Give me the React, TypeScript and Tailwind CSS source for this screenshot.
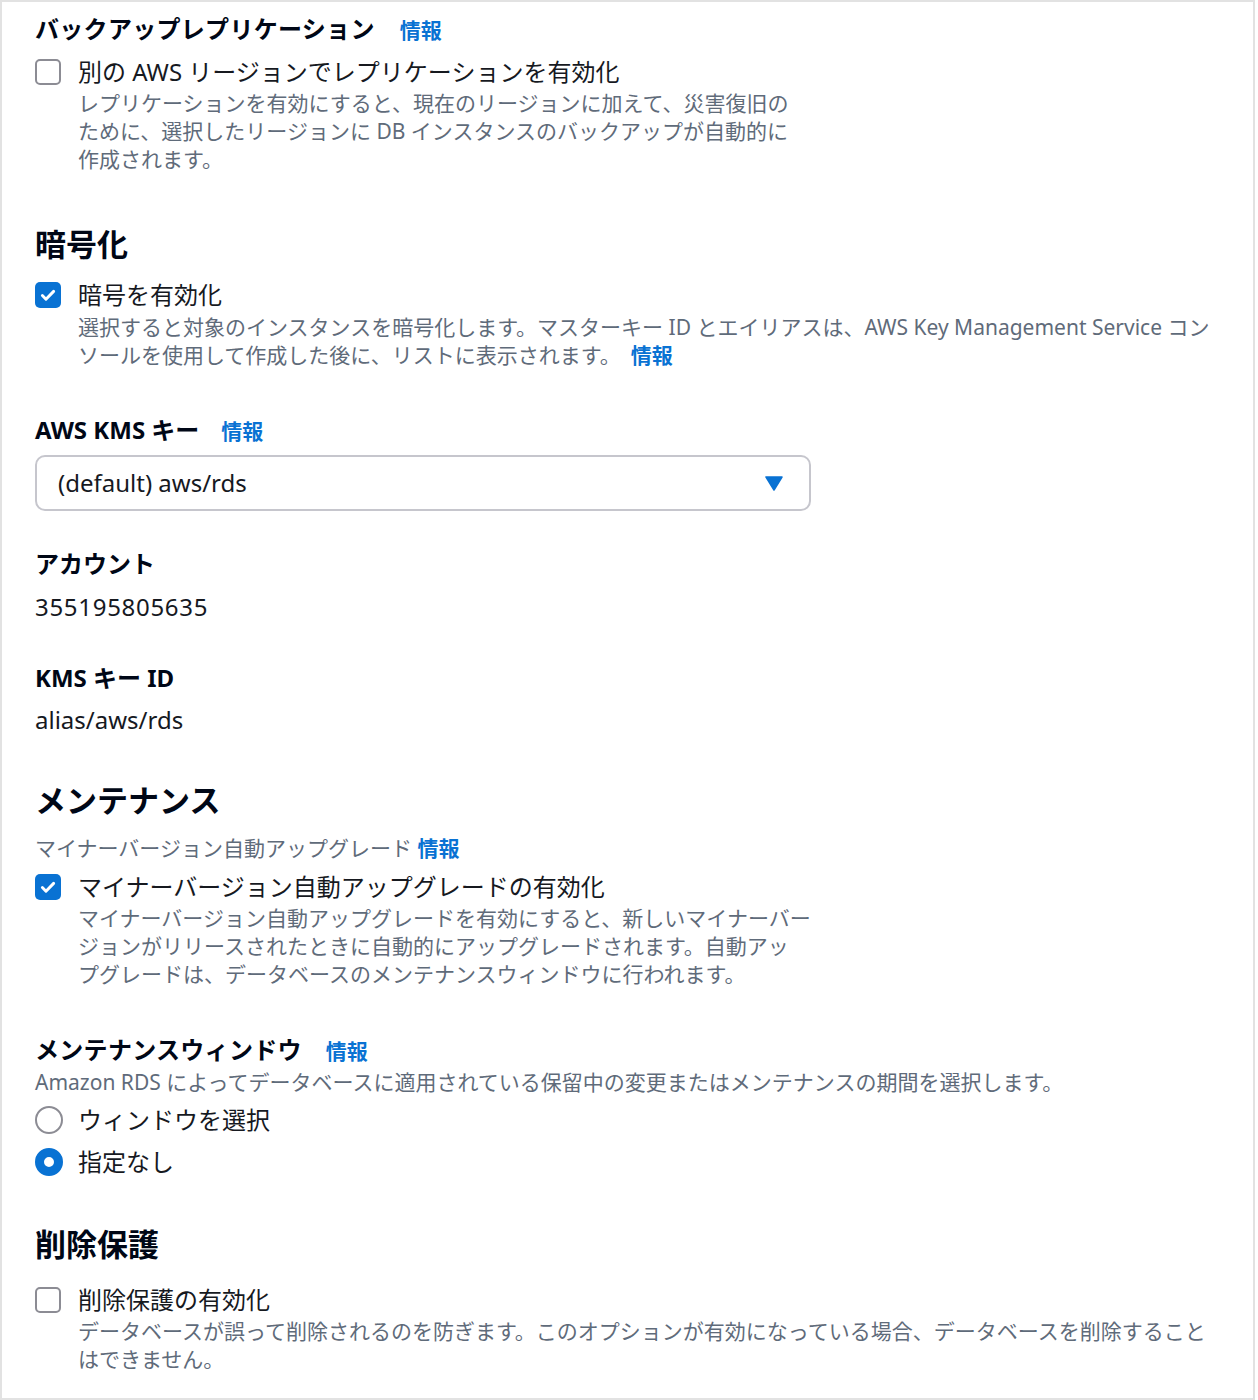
import React from "react";

const font = { fontFamily: '"Noto Sans", "Noto Sans CJK JP", sans-serif' };

const Info = ({ className = "" }: { className?: string }) => (
  <a className={`text-[21px] font-bold text-[#0972d3] ${className}`}>情報</a>
);

const Checkbox = ({ checked }: { checked?: boolean }) =>
  checked ? (
    <span className="mt-[3px] flex h-[26px] w-[26px] shrink-0 items-center justify-center rounded-[5px] bg-[#0972d3]">
      <svg viewBox="0 0 16 16" className="h-[18px] w-[18px]" fill="none">
        <path d="M3 8.5l3.2 3.2L13 4.8" stroke="white" strokeWidth="2.6" strokeLinecap="round" strokeLinejoin="round" />
      </svg>
    </span>
  ) : (
    <span className="mt-[3px] h-[26px] w-[26px] shrink-0 rounded-[5px] border-2 border-[#8c8c94] bg-white" />
  );

const Radio = ({ checked }: { checked?: boolean }) =>
  checked ? (
    <span className="h-[28px] w-[28px] shrink-0 rounded-full border-[9px] border-[#0972d3] bg-white" />
  ) : (
    <span className="h-[28px] w-[28px] shrink-0 rounded-full border-2 border-[#8c8c94] bg-white" />
  );

interface CheckRowProps {
  checked?: boolean;
  label: string;
  children: React.ReactNode;
  className?: string;
}

const CheckRow: React.FC<CheckRowProps> = ({ checked, label, children, className = "" }) => (
  <div className={className}>
    <div className="flex items-start gap-[17px]">
      <Checkbox checked={checked} />
      <span className="text-[24px] leading-[32px] text-[#16191f]">{label}</span>
    </div>
    <p className="ml-[43px] mt-[1px] text-[21px] leading-[28px] text-[#5f6b7a]">{children}</p>
  </div>
);

const SectionTitle = ({ children, className = "" }: { children: React.ReactNode; className?: string }) => (
  <h2 className={`text-[31px] font-bold leading-[40px] text-[#000716] ${className}`}>{children}</h2>
);

const FieldLabel = ({ children, className = "" }: { children: React.ReactNode; className?: string }) => (
  <div className={`text-[24px] font-bold leading-[32px] text-[#000716] ${className}`}>{children}</div>
);

export default function App() {
  return (
    <div style={font} className="h-[1400px] w-[1255px] border-2 border-[#e2e2e2] bg-white px-[33px] pt-[11px]">
      <FieldLabel className="flex items-baseline gap-[25px]">
        <span className="tracking-[0.3px]">バックアップレプリケーション</span>
        <Info />
      </FieldLabel>
      <CheckRow className="mt-[10px]" label="別の AWS リージョンでレプリケーションを有効化">
        レプリケーションを有効にすると、現在のリージョンに加えて、災害復旧の
        <br />
        ために、選択したリージョンに DB インスタンスのバックアップが自動的に
        <br />
        作成されます。
      </CheckRow>

      <SectionTitle className="mt-[51px]">暗号化</SectionTitle>
      <div className="mt-[15px]">
        <div className="flex items-start gap-[17px]">
          <Checkbox checked />
          <span className="text-[24px] leading-[32px] text-[#16191f]">暗号を有効化</span>
        </div>
        <p className="ml-[43px] mt-[2px] text-[21px] leading-[28px] text-[#5f6b7a]">
          選択すると対象のインスタンスを暗号化します。マスターキー ID とエイリアスは、AWS Key Management Service コンソールを使用して作成した後に、リストに表示されます。
          <Info className="ml-[10px]" />
        </p>
      </div>

      <FieldLabel className="mt-[45px] flex items-baseline gap-[22px]">
        <span>AWS KMS キー</span>
        <Info />
      </FieldLabel>
      <div className="mt-[8px] flex h-[56px] w-[776px] items-center justify-between rounded-[10px] border-2 border-[#c6c6cd] pl-[21px] pr-[26px]">
        <span className="text-[24px] text-[#16191f]">(default) aws/rds</span>
        <svg viewBox="0 0 18 15" className="h-[15px] w-[18px]">
          <path d="M1 1h16L9 14z" fill="#0972d3" stroke="#0972d3" strokeWidth="1.5" strokeLinejoin="round" />
        </svg>
      </div>

      <FieldLabel className="mt-[37px]">アカウント</FieldLabel>
      <div className="mt-[11px] text-[24px] leading-[32px] tracking-[0.7px] text-[#16191f]">355195805635</div>
      <FieldLabel className="mt-[39px]">KMS キー ID</FieldLabel>
      <div className="mt-[10px] text-[24px] leading-[32px] text-[#16191f]">alias/aws/rds</div>

      <SectionTitle className="mt-[44px]">メンテナンス</SectionTitle>
      <div className="mt-[14px] text-[21px] leading-[28px] text-[#5f6b7a]">
        マイナーバージョン自動アップグレード <Info />
      </div>
      <CheckRow checked className="mt-[9px]" label="マイナーバージョン自動アップグレードの有効化">
        マイナーバージョン自動アップグレードを有効にすると、新しいマイナーバー
        <br />
        ジョンがリリースされたときに自動的にアップグレードされます。自動アッ
        <br />
        プグレードは、データベースのメンテナンスウィンドウに行われます。
      </CheckRow>

      <FieldLabel className="mt-[46px] flex items-baseline gap-[24px]">
        <span className="tracking-[0.3px]">メンテナンスウィンドウ</span>
        <Info />
      </FieldLabel>
      <p className="mt-[1px] text-[21px] leading-[28px] text-[#5f6b7a]">
        Amazon RDS によってデータベースに適用されている保留中の変更またはメンテナンスの期間を選択します。
      </p>
      <div className="mt-[8px] flex flex-col gap-[10px]">
        <label className="flex items-center gap-[15px]">
          <Radio />
          <span className="text-[24px] leading-[32px] text-[#16191f]">ウィンドウを選択</span>
        </label>
        <label className="flex items-center gap-[15px]">
          <Radio checked />
          <span className="text-[24px] leading-[32px] text-[#16191f]">指定なし</span>
        </label>
      </div>

      <SectionTitle className="mt-[46px]">削除保護</SectionTitle>
      <CheckRow className="mt-[20px]" label="削除保護の有効化">
        データベースが誤って削除されるのを防ぎます。このオプションが有効になっている場合、データベースを削除することはできません。
      </CheckRow>
    </div>
  );
}
